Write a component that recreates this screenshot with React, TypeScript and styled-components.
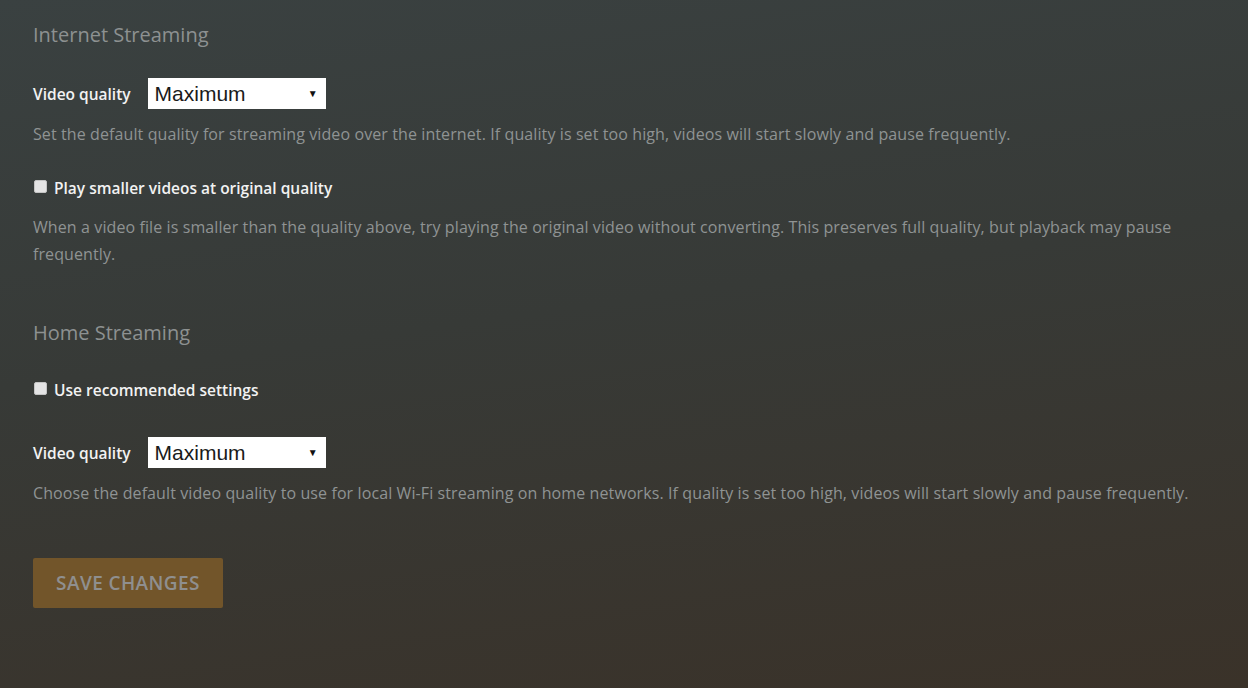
import React, { useState } from 'react'
import styled, { createGlobalStyle } from 'styled-components'

const GlobalStyle = createGlobalStyle`
  html, body {
    margin: 0;
    padding: 0;
    height: 100%;
  }
  body {
    font-family: 'Open Sans', 'Noto Sans', sans-serif;
    background: linear-gradient(172deg, #3a4141 0%, #373a37 45%, #3a3229 100%);
    min-height: 688px;
    overflow: hidden;
  }
`

const Page = styled.form`
  padding: 21px 33px 40px;
  height: 688px;
  box-sizing: border-box;
`

const Section = styled.section<{ $gap?: number }>`
  margin-top: ${p => p.$gap ?? 0}px;
`

const Heading = styled.h2`
  margin: 0;
  font-size: 20px;
  line-height: 28px;
  font-weight: 400;
  color: #8d9191;
`

const Row = styled.div<{ $top: number }>`
  display: flex;
  align-items: center;
  gap: 17px;
  margin-top: ${p => p.$top}px;
`

const Label = styled.label`
  font-size: 15.5px;
  font-weight: 600;
  color: #f2f2f2;
  line-height: 27px;
  padding-top: 2px;
`

const SelectWrap = styled.div`
  position: relative;
  width: 178px;
  height: 31px;
`

const Select = styled.select`
  appearance: none;
  width: 100%;
  height: 100%;
  border: none;
  border-radius: 0;
  background: #ffffff;
  color: #1a1a1a;
  font-family: 'Liberation Sans', Arial, sans-serif;
  font-size: 21px;
  padding: 0 0 0 7px;
  outline: none;
`

const Arrow = styled.span`
  position: absolute;
  right: 8px;
  top: 9px;
  font-size: 10px;
  line-height: 12px;
  color: #111;
  pointer-events: none;
`

const Help = styled.p<{ $top: number }>`
  margin: ${p => p.$top}px 0 0;
  font-size: 16px;
  letter-spacing: 0.1px;
  line-height: 27px;
  color: #8f9393;
`

const CheckRow = styled.label<{ $top: number }>`
  display: flex;
  align-items: center;
  gap: 7px;
  margin-top: ${p => p.$top}px;
  font-size: 15.5px;
  font-weight: 600;
  line-height: 27px;
  color: #f2f2f2;
  cursor: pointer;
`

const Box = styled.input`
  appearance: none;
  width: 13px;
  height: 13px;
  margin: -5px 0 0 1px;
  background: #e4e4e4;
  border: 1px solid #c4c4c4;
  border-radius: 2px;
  box-sizing: border-box;
  &:checked {
    background: #cc7b19;
  }
`

const SaveButton = styled.button`
  margin-top: 51px;
  width: 190px;
  height: 50px;
  border: none;
  border-radius: 2px;
  background: #72552a;
  color: #8f8f8f;
  font-family: 'Open Sans', 'Noto Sans', sans-serif;
  font-size: 19px;
  font-weight: 600;
  letter-spacing: 0.4px;
  text-transform: uppercase;
  cursor: default;
`

const qualities = ['Maximum', '20 Mbps 1080p', '12 Mbps 1080p', '8 Mbps 1080p', '4 Mbps 720p', '2 Mbps 720p']

function QualitySelect ({ value, onChange }: { value: string, onChange: (v: string) => void }) {
  return (
    <SelectWrap>
      <Select value={value} onChange={e => onChange(e.target.value)}>
        {qualities.map(q => <option key={q} value={q}>{q}</option>)}
      </Select>
      <Arrow>▼</Arrow>
    </SelectWrap>
  )
}

function App () {
  const [remote, setRemote] = useState('Maximum')
  const [local, setLocal] = useState('Maximum')
  const [smaller, setSmaller] = useState(false)
  const [recommended, setRecommended] = useState(false)

  return (
    <>
      <GlobalStyle />
      <Page onSubmit={e => e.preventDefault()}>
        <Section>
          <Heading>Internet Streaming</Heading>
          <Row $top={29}>
            <Label>Video quality</Label>
            <QualitySelect value={remote} onChange={setRemote} />
          </Row>
          <Help $top={12}>
            Set the default quality for streaming video over the internet. If quality is set too high, videos will start slowly and pause frequently.
          </Help>
          <CheckRow $top={27}>
            <Box type='checkbox' checked={smaller} onChange={e => setSmaller(e.target.checked)} />
            Play smaller videos at original quality
          </CheckRow>
          <Help $top={12}>
            When a video file is smaller than the quality above, try playing the original video without converting. This preserves full quality, but playback may pause frequently.
          </Help>
        </Section>

        <Section $gap={51}>
          <Heading>Home Streaming</Heading>
          <CheckRow $top={30}>
            <Box type='checkbox' checked={recommended} onChange={e => setRecommended(e.target.checked)} />
            Use recommended settings
          </CheckRow>
          <Row $top={33}>
            <Label>Video quality</Label>
            <QualitySelect value={local} onChange={setLocal} />
          </Row>
          <Help $top={12}>
            Choose the default video quality to use for local Wi-Fi streaming on home networks. If quality is set too high, videos will start slowly and pause frequently.
          </Help>
        </Section>

        <SaveButton type='submit'>Save Changes</SaveButton>
      </Page>
    </>
  )
}

export default App
